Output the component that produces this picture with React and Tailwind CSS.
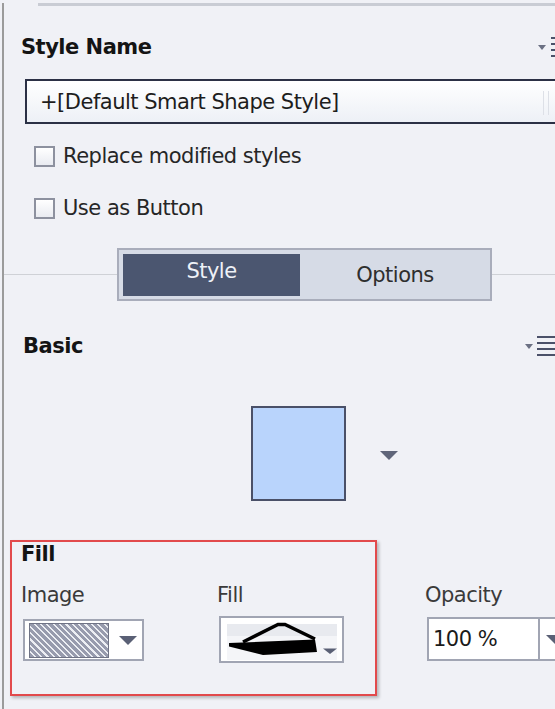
import React from 'react';

const MenuLines = () => (
  <div className="flex flex-col gap-[4px] w-[18px]">
    <span className="block h-[2px] bg-[#4b5169]" />
    <span className="block h-[2px] bg-[#4b5169]" />
    <span className="block h-[2px] bg-[#4b5169]" />
    <span className="block h-[2px] bg-[#4b5169]" />
  </div>
);

const SmallTri = () => (
  <span className="block w-0 h-0 border-x-[4px] border-t-[5px] border-x-transparent border-t-[#6b7083]" />
);

const DropTri = ({ className = '' }) => (
  <span className={`block w-0 h-0 border-x-[9px] border-t-[9px] border-x-transparent border-t-[#5a6075] ${className}`} />
);

const Checkbox = ({ label, className = '' }) => (
  <label className={`ml-[30px] flex items-center gap-[8px] h-[24px] ${className}`}>
    <span className="block w-[21px] h-[21px] border-2 border-[#8d919f] bg-linear-to-b from-white to-[#e9ebf1]" />
    <span className="text-[#262626]">{label}</span>
  </label>
);

const FillPreview = () => (
  <svg width="121" height="43" viewBox="0 0 121 43">
    <rect x="6" y="6" width="110" height="12" fill="#e8eaef" />
    <rect x="6" y="18" width="110" height="24" fill="#f4f5f8" />
    <polyline points="22,24 57,6.5 64,6.5 94,21" fill="none" stroke="#000" strokeWidth="3.5" />
    <polygon points="8,25 94,21.5 96,34 42,37 8,28.5" fill="#000" />
    <polygon points="102,30.5 116,30.5 109,36" fill="#5a6075" />
  </svg>
);

export default function App() {
  return (
    <div className="w-[555px] h-[709px] overflow-hidden bg-[#f0f1f6] font-['DejaVu_Sans',Verdana,sans-serif] text-[21px] leading-[24px] tracking-[-0.5px] text-[#222]">
      <div className="ml-[2px] h-full border-l-2 border-[#9b9b9b]">
        {/* top edge of the panel above */}
        <div className="ml-[34px] mt-[3px] h-[3px] bg-[#c9ccd4]" />

        {/* Style Name */}
        <div className="mt-[29px] flex items-center pl-[17px]">
          <span className="font-bold text-[#141414]">Style Name</span>
          <div className="ml-auto -mr-[14px] flex items-center gap-[5px]">
            <SmallTri />
            <MenuLines />
          </div>
        </div>

        <div className="relative mt-[20px] ml-[21px] w-[560px] h-[45px] border-2 border-[#2b3045] bg-linear-to-b from-white to-[#edf0f6] flex items-center pl-[13px] text-[#1d1d1d]">
          +[Default Smart Shape Style]
          <span className="absolute left-[516px] top-[10px] h-[24px] w-px bg-[#dde0e7]" />
          <span className="absolute left-[521px] top-[10px] h-[24px] w-px bg-[#dde0e7]" />
        </div>

        <Checkbox label="Replace modified styles" className="mt-[20px]" />
        <Checkbox label="Use as Button" className="mt-[28px]" />

        {/* Style / Options tabs */}
        <div className="mt-[28px] flex items-center">
          <div className="w-[113px] h-px bg-[#cfd1d6]" />
          <div className="w-[375px] h-[53px] border-2 border-[#a9adbb] bg-[#d6dbe6] flex pl-[4px] pt-[4px] pb-[3px]">
            <div className="w-[177px] bg-[#4b5670] text-[#eef1f7] flex items-center justify-center pb-[8px]">Style</div>
            <div className="flex-1 flex items-center justify-center text-[#2e2e2e]">Options</div>
          </div>
          <div className="flex-1 h-px bg-[#cfd1d6]" />
        </div>

        {/* Basic */}
        <div className="mt-[33px] flex items-center pl-[19px]">
          <span className="font-bold text-[#141414]">Basic</span>
          <div className="ml-auto flex items-center gap-[4px]">
            <SmallTri />
            <MenuLines />
          </div>
        </div>

        <div className="mt-[48px] ml-[247px] flex items-center gap-[34px]">
          <div className="w-[95px] h-[95px] border-2 border-[#4a5068] bg-[#b9d4fc]" />
          <DropTri className="mt-[4px] border-t-[#5f6579]" />
        </div>

        {/* Fill */}
        <div className="relative mt-[41px] pl-[17px]">
          <div className="font-bold text-[#141414]">Fill</div>
          <div className="mt-[17px] flex items-start text-[#3a3a3a]">
            <div className="w-[196px] shrink-0">
              <div>Image</div>
              <div className="mt-[12px] ml-[2px] w-[121px] h-[42px] border-2 border-[#a1a5b3] bg-white flex items-center pl-[4px]">
                <div className="w-[80px] h-[35px] border border-[#6f7385] bg-[repeating-linear-gradient(45deg,#979bad_0px,#979bad_3px,#eceef3_3px,#eceef3_4.5px)]" />
                <DropTri className="ml-[10px]" />
              </div>
            </div>
            <div className="w-[208px] shrink-0">
              <div>Fill</div>
              <div className="mt-[9px] ml-[2px] w-[125px] h-[47px] border-2 border-[#a1a5b3] bg-white">
                <FillPreview />
              </div>
            </div>
            <div className="shrink-0">
              <div>Opacity</div>
              <div className="mt-[10px] ml-[2px] w-[140px] h-[44px] border-2 border-[#a1a5b3] bg-white flex">
                <div className="w-[109px] flex items-center pl-[4px] text-[#1a1a1a]">100 %</div>
                <div className="flex-1 border-l-2 border-[#a1a5b3] flex items-center pl-[6px]">
                  <DropTri />
                </div>
              </div>
            </div>
          </div>
          {/* red annotation frame */}
          <div className="absolute -top-[2px] left-[6px] w-[367px] h-[156px] border-2 border-[#e24a4c] shadow-[2px_2px_3px_rgba(0,0,0,0.25)]" />
        </div>
      </div>
    </div>
  );
}
